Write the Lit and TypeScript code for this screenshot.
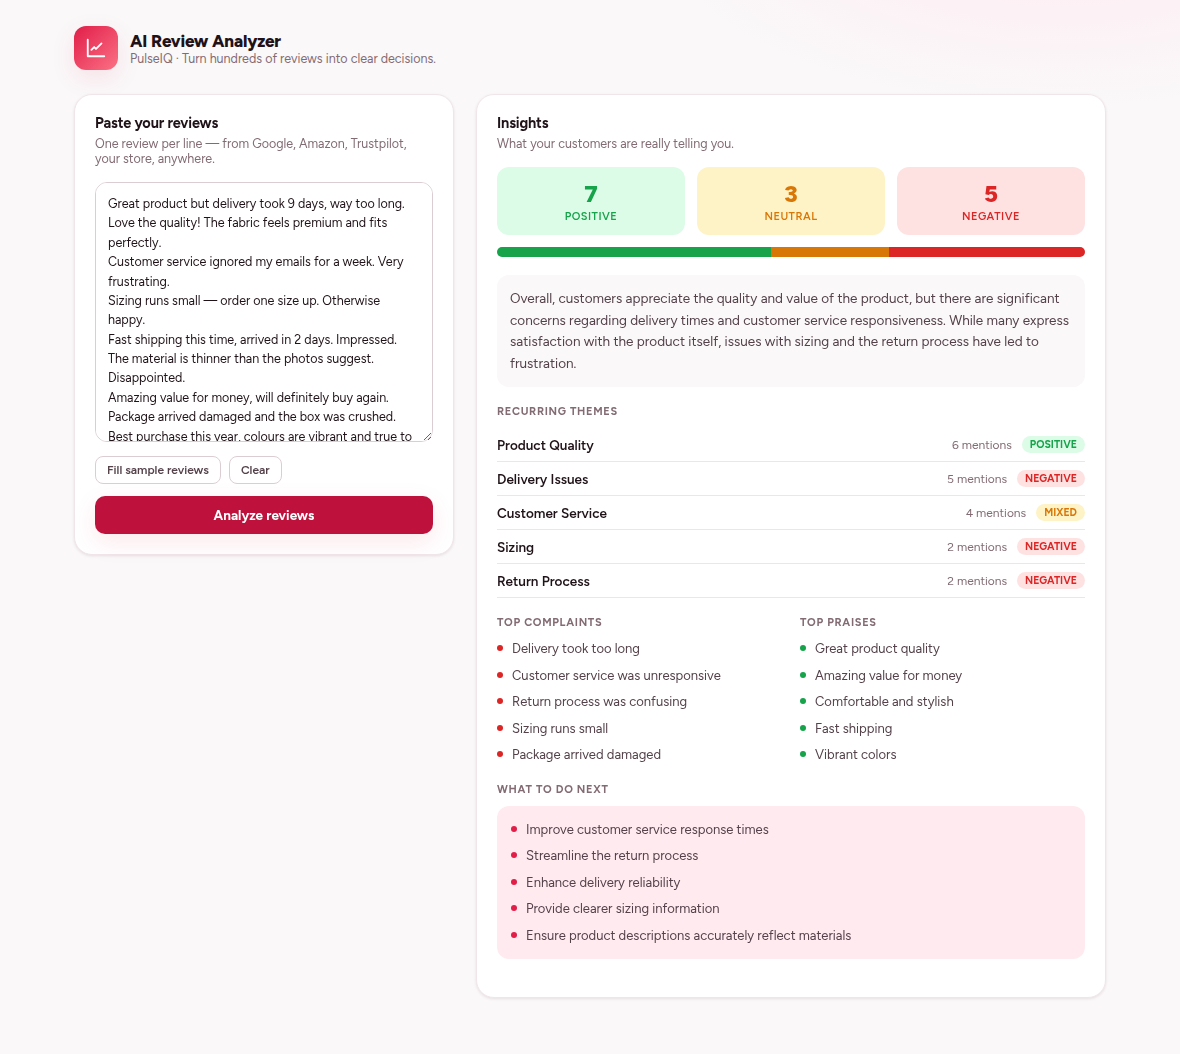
import { LitElement, css, html } from 'lit'
import { customElement, state } from 'lit/decorators.js'

type Tone = 'positive' | 'neutral' | 'mixed' | 'negative'

interface Theme {
  name: string
  mentions: number
  tone: Tone
}

const SAMPLE = [
  'Great product but delivery took 9 days, way too long.',
  'Love the quality! The fabric feels premium and fits perfectly.',
  'Customer service ignored my emails for a week. Very frustrating.',
  'Sizing runs small — order one size up. Otherwise happy.',
  'Fast shipping this time, arrived in 2 days. Impressed.',
  'The material is thinner than the photos suggest. Disappointed.',
  'Amazing value for money, will definitely buy again.',
  'Package arrived damaged and the box was crushed.',
  'Best purchase this year, colours are vibrant and true to photo.',
].join('\n')

const COUNTS: { tone: Tone; value: number }[] = [
  { tone: 'positive', value: 7 },
  { tone: 'neutral', value: 3 },
  { tone: 'negative', value: 5 },
]

const THEMES: Theme[] = [
  { name: 'Product Quality', mentions: 6, tone: 'positive' },
  { name: 'Delivery Issues', mentions: 5, tone: 'negative' },
  { name: 'Customer Service', mentions: 4, tone: 'mixed' },
  { name: 'Sizing', mentions: 2, tone: 'negative' },
  { name: 'Return Process', mentions: 2, tone: 'negative' },
]

const COMPLAINTS = [
  'Delivery took too long',
  'Customer service was unresponsive',
  'Return process was confusing',
  'Sizing runs small',
  'Package arrived damaged',
]

const PRAISES = [
  'Great product quality',
  'Amazing value for money',
  'Comfortable and stylish',
  'Fast shipping',
  'Vibrant colors',
]

const ACTIONS = [
  'Improve customer service response times',
  'Streamline the return process',
  'Enhance delivery reliability',
  'Provide clearer sizing information',
  'Ensure product descriptions accurately reflect materials',
]

@customElement('app-root')
export class AppRoot extends LitElement {
  @state() private _text = SAMPLE

  static styles = css`
    :host {
      --ink: #1f1218;
      --ink-2: #54414a;
      --muted: #836b74;
      --line: #ede6e9;
      --line-strong: #dccdd3;
      --green: #16a34a;
      --green-soft: #dcfce7;
      --amber: #d97706;
      --amber-soft: #fef3c7;
      --red: #dc2626;
      --red-soft: #fee2e2;
      --rose: #e11d48;

      display: block;
      box-sizing: border-box;
      min-height: 1054px;
      background: radial-gradient(800px 400px at 90% -10%, #ffe9f0, transparent 53%) #faf8f9;
      color: var(--ink);
      font-family: Figtree, Lato, 'Liberation Sans', sans-serif;
      font-size: 13px;
    }

    *, *::before { box-sizing: border-box; }
    h1, h2, h3, p, ul { margin: 0; padding: 0; }
    ul { list-style: none; }

    .wrap {
      max-width: 1080px;
      margin: 0 auto;
      padding: 26px 24px 56px;
    }

    header { display: flex; align-items: center; gap: 12px; margin-bottom: 24px; }

    .logo {
      width: 44px;
      height: 44px;
      border-radius: 12px;
      display: grid;
      place-items: center;
      background: linear-gradient(135deg, #e11d48, #fb7185);
      box-shadow: 0 8px 24px rgba(225, 29, 72, 0.1);
    }

    .logo svg { display: block; }

    h1 { font-size: 17px; line-height: 20px; font-weight: 800; letter-spacing: -0.01em; }
    .tagline { font-size: 12.5px; line-height: 15px; color: var(--muted); }

    .grid {
      display: grid;
      grid-template-columns: 380px 1fr;
      gap: 22px;
      align-items: start;
    }

    .card {
      background: #fff;
      border: 1px solid #f0e6ea;
      border-radius: 18px;
      padding: 20px;
      box-shadow: 0 1px 3px rgba(60, 20, 35, 0.1);
    }

    .insights { height: 904px; }

    h2 { font-size: 14.5px; line-height: 17px; font-weight: 700; letter-spacing: -0.01em; }
    .sub { margin-top: 4px; font-size: 12.5px; line-height: 15px; color: var(--muted); }

    textarea {
      display: block;
      width: 100%;
      height: 260px;
      margin-top: 16px;
      padding: 11px 12px;
      border: 1px solid var(--line-strong);
      border-radius: 12px;
      background: #fff;
      color: var(--ink);
      font: 12.5px/19.375px Figtree, Lato, 'Liberation Sans', sans-serif;
      resize: vertical;
      outline: none;
    }

    .tools { display: flex; gap: 8px; margin: 14px 0 12px; }

    button { font-family: inherit; cursor: pointer; }

    .ghost {
      height: 28px;
      padding: 0 11px;
      border: 1px solid var(--line-strong);
      border-radius: 8px;
      background: #fff;
      color: var(--ink-2);
      font-size: 12px;
      font-weight: 600;
    }

    .primary {
      display: block;
      width: 100%;
      height: 38px;
      border: 0;
      border-radius: 10px;
      background: #be123c;
      color: #fff;
      font-size: 13.5px;
      font-weight: 700;
      box-shadow: 0 8px 24px rgba(225, 29, 72, 0.1);
    }

    .stats {
      display: grid;
      grid-template-columns: repeat(3, 1fr);
      gap: 12px;
      margin-top: 16px;
    }

    .stat {
      height: 68px;
      padding-top: 13px;
      border-radius: 12px;
      text-align: center;
    }

    .stat b { display: block; font-size: 24px; line-height: 28px; font-weight: 800; }
    .stat span {
      display: block;
      font-size: 11px;
      line-height: 18px;
      font-weight: 600;
      text-transform: uppercase;
      letter-spacing: 0.5px;
    }

    .positive { background: var(--green-soft); color: var(--green); }
    .neutral, .mixed { background: var(--amber-soft); color: var(--amber); }
    .negative { background: var(--red-soft); color: var(--red); }

    .bar {
      display: flex;
      height: 10px;
      margin: 12px 0 18px;
      border-radius: 5px;
      overflow: hidden;
    }

    .seg.positive { background: var(--green); }
    .seg.neutral { background: var(--amber); }
    .seg.negative { background: var(--red); }

    .summary {
      height: 112px;
      padding: 13px;
      border-radius: 12px;
      background: #faf8f9;
      color: var(--ink-2);
      font-size: 13.5px;
      line-height: 21.6px;
    }

    h3 {
      font-size: 11px;
      line-height: 14px;
      font-weight: 700;
      letter-spacing: 0.7px;
      text-transform: uppercase;
      color: var(--muted);
    }

    .themes-title { margin: 18px 0 9px; }

    .theme {
      display: flex;
      align-items: center;
      height: 34px;
      border-bottom: 1px solid var(--line);
    }

    .theme .name { flex: 1; font-size: 13.5px; font-weight: 600; padding-top: 1px; }
    .theme .count { font-size: 12px; color: var(--muted); margin-right: 10px; }

    .pill {
      height: 17px;
      padding: 0 8px;
      border-radius: 9px;
      font-size: 10.5px;
      line-height: 17px;
      font-weight: 700;
      letter-spacing: 0.03px;
      text-transform: uppercase;
    }

    .columns {
      display: grid;
      grid-template-columns: 1fr 1fr;
      gap: 18px;
      margin-top: 18px;
    }

    .list { padding-top: 5.5px; font-size: 13px; color: var(--ink-2); }

    .list li {
      display: flex;
      align-items: center;
      gap: 9px;
      height: 26.5px;
    }

    .list li::before {
      content: '';
      width: 6px;
      height: 6px;
      margin-top: -1px;
      border-radius: 50%;
      background: var(--dot);
    }

    .list.bad { --dot: var(--red); }
    .list.good { --dot: var(--green); }

    .next-title { margin: 15px 0 9px; }

    .list.next {
      --dot: var(--rose);
      padding: 10px 14px;
      border-radius: 12px;
      background: #ffebef;
    }
  `

  private _onInput(e: Event) {
    this._text = (e.target as HTMLTextAreaElement).value
  }

  private _list(items: string[], kind: string) {
    return html`<ul class="list ${kind}">${items.map((item) => html`<li>${item}</li>`)}</ul>`
  }

  private _input() {
    return html`
      <section class="card">
        <h2>Paste your reviews</h2>
        <p class="sub">One review per line — from Google, Amazon, Trustpilot, your store, anywhere.</p>
        <textarea spellcheck="false" .value=${this._text} @input=${this._onInput}></textarea>
        <div class="tools">
          <button class="ghost" @click=${() => { this._text = SAMPLE }}>Fill sample reviews</button>
          <button class="ghost" @click=${() => { this._text = '' }}>Clear</button>
        </div>
        <button class="primary">Analyze reviews</button>
      </section>
    `
  }

  private _insights() {
    const total = COUNTS.reduce((sum, c) => sum + c.value, 0)
    return html`
      <section class="card insights">
        <h2>Insights</h2>
        <p class="sub">What your customers are really telling you.</p>
        <div class="stats">
          ${COUNTS.map((c) => html`<div class="stat ${c.tone}"><b>${c.value}</b><span>${c.tone}</span></div>`)}
        </div>
        <div class="bar">
          ${COUNTS.map((c) => html`<div class="seg ${c.tone}" style="width: ${(c.value / total) * 100}%"></div>`)}
        </div>
        <p class="summary">
          Overall, customers appreciate the quality and value of the product, but there are significant
          concerns regarding delivery times and customer service responsiveness. While many express
          satisfaction with the product itself, issues with sizing and the return process have led to
          frustration.
        </p>
        <h3 class="themes-title">Recurring themes</h3>
        ${THEMES.map((t) => html`
          <div class="theme">
            <span class="name">${t.name}</span>
            <span class="count">${t.mentions} mentions</span>
            <span class="pill ${t.tone}">${t.tone}</span>
          </div>
        `)}
        <div class="columns">
          <div><h3>Top complaints</h3>${this._list(COMPLAINTS, 'bad')}</div>
          <div><h3>Top praises</h3>${this._list(PRAISES, 'good')}</div>
        </div>
        <h3 class="next-title">What to do next</h3>
        ${this._list(ACTIONS, 'next')}
      </section>
    `
  }

  render() {
    return html`
      <div class="wrap">
        <header>
          <div class="logo">
            <svg width="22" height="22" viewBox="0 0 24 24" fill="none" stroke="#fff" stroke-width="2"
              stroke-linecap="round" stroke-linejoin="round">
              <path d="M3 3v18h18" />
              <path d="M7 14l3-3 2 2 6-6" />
            </svg>
          </div>
          <div>
            <h1>AI Review Analyzer</h1>
            <p class="tagline">PulseIQ · Turn hundreds of reviews into clear decisions.</p>
          </div>
        </header>
        <main class="grid">${this._input()}${this._insights()}</main>
      </div>
    `
  }
}
